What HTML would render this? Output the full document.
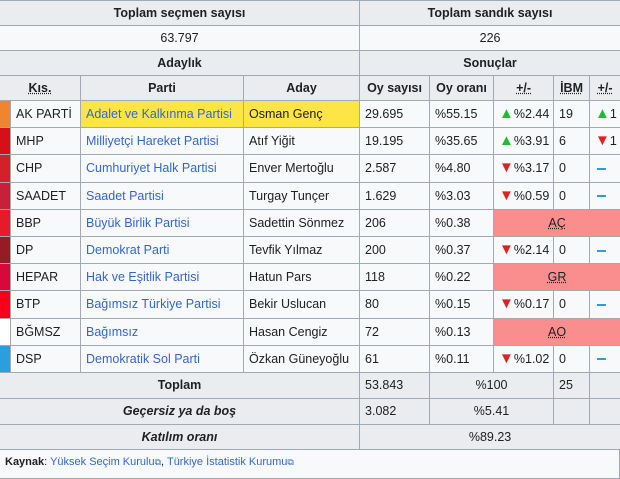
<!DOCTYPE html>
<html><head><meta charset="utf-8"><style>
body{margin:0;background:#fff;font-family:"Liberation Sans",sans-serif;font-size:12.5px;color:#202122;}
table{border-collapse:collapse;table-layout:fixed;width:621px;margin-left:-1px;}
td,th{border:1px solid #a2a9b1;padding:0 5px;white-space:nowrap;overflow:hidden;background:#f8f9fa;}
th{background:#eaecf0;font-weight:bold;text-align:center;}
tr{height:25px}
tr.d{height:27.2px}
a{color:#3366cc;text-decoration:none}
.c{text-align:center}
.ab{text-decoration:underline dotted;}
.p{background:#fa8e8e;text-align:center}
.up{color:#22bb33;font-size:15px;line-height:10px}
.dn{color:#dd2222;font-size:15px;line-height:10px}
.m{display:inline-block;width:9px;height:2px;background:#3399dd;vertical-align:middle;margin-left:2px}
.y{background:#fde545}
.n{padding:0}
i{font-style:italic}
.src{font-size:11px;padding:6px 5px;border:1px solid #a2a9b1;border-top:none;height:16px;width:609px;margin-left:-1px;background:#f8f9fa}
</style></head><body>
<table>
<colgroup><col style="width:11px"><col style="width:70px"><col style="width:163px"><col style="width:116px"><col style="width:70px"><col style="width:64px"><col style="width:60px"><col style="width:36px"><col style="width:31px"></colgroup>
<tr><th colspan="4">Toplam seçmen sayısı</th><th colspan="5">Toplam sandık sayısı</th></tr>
<tr><td colspan="4" class="c">63.797</td><td colspan="5" class="c">226</td></tr>
<tr><th colspan="4">Adaylık</th><th colspan="5">Sonuçlar</th></tr>
<tr><th colspan="2"><span class="ab">Kıs.</span></th><th>Parti</th><th>Aday</th><th>Oy sayısı</th><th>Oy oranı</th><th><span class="ab">+/-</span></th><th><span class="ab">İBM</span></th><th><span class="ab">+/-</span></th></tr>
<tr class="d"><td class="n" style="background:#f0852d"></td><td>AK PARTİ</td><td class="y"><a>Adalet ve Kalkınma Partisi</a></td><td class="y">Osman Genç</td><td>29.695</td><td>%55.15</td><td><span class="up">▲</span>%2.44</td><td>19</td><td><span class="up">▲</span>1</td></tr>
<tr class="d"><td class="n" style="background:#d5101a"></td><td>MHP</td><td><a>Milliyetçi Hareket Partisi</a></td><td>Atıf Yiğit</td><td>19.195</td><td>%35.65</td><td><span class="up">▲</span>%3.91</td><td>6</td><td><span class="dn">▼</span>1</td></tr>
<tr class="d"><td class="n" style="background:#d42028"></td><td>CHP</td><td><a>Cumhuriyet Halk Partisi</a></td><td>Enver Mertoğlu</td><td>2.587</td><td>%4.80</td><td><span class="dn">▼</span>%3.17</td><td>0</td><td><span class="m"></span></td></tr>
<tr class="d"><td class="n" style="background:#c8203a"></td><td>SAADET</td><td><a>Saadet Partisi</a></td><td>Turgay Tunçer</td><td>1.629</td><td>%3.03</td><td><span class="dn">▼</span>%0.59</td><td>0</td><td><span class="m"></span></td></tr>
<tr class="d"><td class="n" style="background:#e51b2b"></td><td>BBP</td><td><a>Büyük Birlik Partisi</a></td><td>Sadettin Sönmez</td><td>206</td><td>%0.38</td><td colspan="3" class="p"><span class="ab">AÇ</span></td></tr>
<tr class="d"><td class="n" style="background:#941c22"></td><td>DP</td><td><a>Demokrat Parti</a></td><td>Tevfik Yılmaz</td><td>200</td><td>%0.37</td><td><span class="dn">▼</span>%2.14</td><td>0</td><td><span class="m"></span></td></tr>
<tr class="d"><td class="n" style="background:#d6093a"></td><td>HEPAR</td><td><a>Hak ve Eşitlik Partisi</a></td><td>Hatun Pars</td><td>118</td><td>%0.22</td><td colspan="3" class="p"><span class="ab">GR</span></td></tr>
<tr class="d"><td class="n" style="background:#f8001c"></td><td>BTP</td><td><a>Bağımsız Türkiye Partisi</a></td><td>Bekir Uslucan</td><td>80</td><td>%0.15</td><td><span class="dn">▼</span>%0.17</td><td>0</td><td><span class="m"></span></td></tr>
<tr class="d"><td class="n" style="background:#fff"></td><td>BĞMSZ</td><td><a>Bağımsız</a></td><td>Hasan Cengiz</td><td>72</td><td>%0.13</td><td colspan="3" class="p"><span class="ab">AO</span></td></tr>
<tr class="d"><td class="n" style="background:#2a9fdf"></td><td>DSP</td><td><a>Demokratik Sol Parti</a></td><td>Özkan Güneyoğlu</td><td>61</td><td>%0.11</td><td><span class="dn">▼</span>%1.02</td><td>0</td><td><span class="m"></span></td></tr>
<tr style="height:26px"><th colspan="4">Toplam</th><td style="background:#eaecf0">53.843</td><td colspan="2" class="c" style="background:#eaecf0">%100</td><td style="background:#eaecf0">25</td><td style="background:#eaecf0"></td></tr>
<tr style="height:26px"><th colspan="4"><i>Geçersiz ya da boş</i></th><td style="background:#eaecf0">3.082</td><td colspan="2" class="c" style="background:#eaecf0">%5.41</td><td style="background:#eaecf0"></td><td style="background:#eaecf0"></td></tr>
<tr style="height:25px"><th colspan="4"><i>Katılım oranı</i></th><td colspan="5" class="c" style="background:#eaecf0">%89.23</td></tr>
</table>
<div class="src"><b>Kaynak</b>: <a>Yüksek Seçim Kurulu</a><span style="color:#3366cc;font-size:9px">⧉</span>, <a>Türkiye İstatistik Kurumu</a><span style="color:#3366cc;font-size:9px">⧉</span></div>
</body></html>
